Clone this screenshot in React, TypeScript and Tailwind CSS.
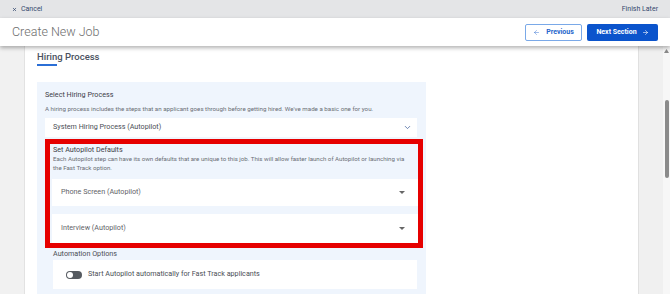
import { ArrowLeft, ArrowRight, ChevronDown, X } from "lucide-react";

function Caret() {
  return (
    <svg width="6" height="3" viewBox="0 0 6 3" className="text-[#666]">
      <path d="M0 0h6L3 3z" fill="currentColor" />
    </svg>
  );
}

function AutopilotRow({ label, className }: { label: string; className: string }) {
  return (
    <div className={`flex items-center justify-between bg-white pl-[9px] pr-[13px] ${className}`}>
      <span className="text-[7.2px] text-[#5f6368]">{label}</span>
      <Caret />
    </div>
  );
}

export default function App() {
  return (
    <div
      className="flex h-[294px] w-[670px] flex-col overflow-hidden bg-white"
      style={{ fontFamily: "Roboto, 'Noto Sans', sans-serif" }}
    >
      {/* top strip */}
      <div className="flex h-[18px] shrink-0 items-center justify-between bg-[#e4e5e7] pl-[12px] pr-[12px] text-[7px] text-[#34496e]">
        <div className="flex items-center gap-[4px]">
          <X size={5} strokeWidth={3.5} />
          <span>Cancel</span>
        </div>
        <span>Finish Later</span>
      </div>

      {/* header */}
      <div className="relative z-10 flex h-[28px] shrink-0 items-center justify-between bg-white pl-[12px] pr-[12px] shadow-[0_2px_4px_rgba(0,0,0,0.3)]">
        <h1 className="text-[12.5px] font-light text-[#6e6e6e]">Create New Job</h1>
        <div className="flex items-center gap-[5px]">
          <button className="flex h-[17px] w-[57px] items-center justify-center gap-[6px] rounded-[2px] border border-[#7aa9e8] text-[7px] font-bold text-[#2566cc]">
            <ArrowLeft size={7} strokeWidth={1.5} />
            Previous
          </button>
          <button className="flex h-[17px] w-[71px] items-center justify-center gap-[5px] rounded-[2px] bg-[#0b54cc] text-[7px] font-bold text-white">
            Next Section
            <ArrowRight size={7} strokeWidth={2} />
          </button>
        </div>
      </div>

      {/* body */}
      <div className="flex min-h-0 flex-1">
        <div className="w-[25px] shrink-0 border-r border-[#e2e2e2] bg-[#f1f1f1]" />

        <div className="w-[613px] shrink-0 bg-white pl-[12px]">
          <div className="pt-[5px]">
            <h2 className="text-[9.5px] font-medium leading-[12px] text-[#4a5160]">Hiring Process</h2>
            <div className="mt-[1px] h-[2px] w-[20px] bg-[#2b6fd6]" />
          </div>

          <div className="mt-[16px] w-[389px] bg-[#eff5fd] pb-[5px] pl-[8px] pt-[8px]">
            <div className="text-[7.2px] leading-[10px] text-[#3c4048]">Select Hiring Process</div>
            <p className="mt-[5px] text-[6.2px] leading-[8px] text-[#6a6e75]">
              A hiring process includes the steps that an applicant goes through before getting hired. We've made a basic one for you.
            </p>
            <div className="mt-[5px] flex h-[19px] w-[372px] items-center justify-between bg-white pl-[8px] pr-[5px]">
              <span className="text-[7.2px] text-[#4a4e55]">System Hiring Process (Autopilot)</span>
              <ChevronDown size={9} strokeWidth={2} className="text-[#3f5f9a]" />
            </div>

            <div className="mt-[2px] w-[378px] border-[5px] border-[#e60000] pl-[2px]">
              <div className="pl-[1px] pt-[1px] text-[7.2px] leading-[10px] text-[#3c4048]">Set Autopilot Defaults</div>
              <p className="pl-[1px] pr-[4px] text-[6.15px] leading-[8.5px] text-[#6a6e75]">
                Each Autopilot step can have its own defaults that are unique to this job. This will allow faster launch of Autopilot or launching via the Fast Track option.
              </p>
              <AutopilotRow label="Phone Screen (Autopilot)" className="mt-[7px] h-[27px]" />
              <AutopilotRow label="Interview (Autopilot)" className="mt-[8px] h-[29px]" />
            </div>

            <div className="pl-[8px] pt-[1px]">
              <div className="text-[7.2px] leading-[10px] text-[#4a4e55]">Automation Options</div>
              <div className="mt-[1px] flex h-[29px] w-[364px] items-center gap-[6px] bg-white pl-[13px]">
                <div className="flex h-[8px] w-[16px] items-center rounded-full bg-[#555a60] px-[1px]">
                  <div className="h-[6px] w-[6px] rounded-full bg-white" />
                </div>
                <span className="text-[7.2px] text-[#4a4e55]">Start Autopilot automatically for Fast Track applicants</span>
              </div>
            </div>
          </div>
        </div>

        <div className="w-[25px] shrink-0 border-l border-[#e0e0e0] bg-[#f0f0f0]" />

        {/* scrollbar */}
        <div className="flex w-[7px] shrink-0 flex-col items-center bg-[#f7f7f7] pt-[3px]">
          <svg width="5" height="4" viewBox="0 0 5 4">
            <path d="M2.5 0L5 4H0z" fill="#8a8a8a" />
          </svg>
          <div className="mt-[47px] h-[78px] w-[4px] rounded-full bg-[#8b8b8b]" />
        </div>
      </div>
    </div>
  );
}
